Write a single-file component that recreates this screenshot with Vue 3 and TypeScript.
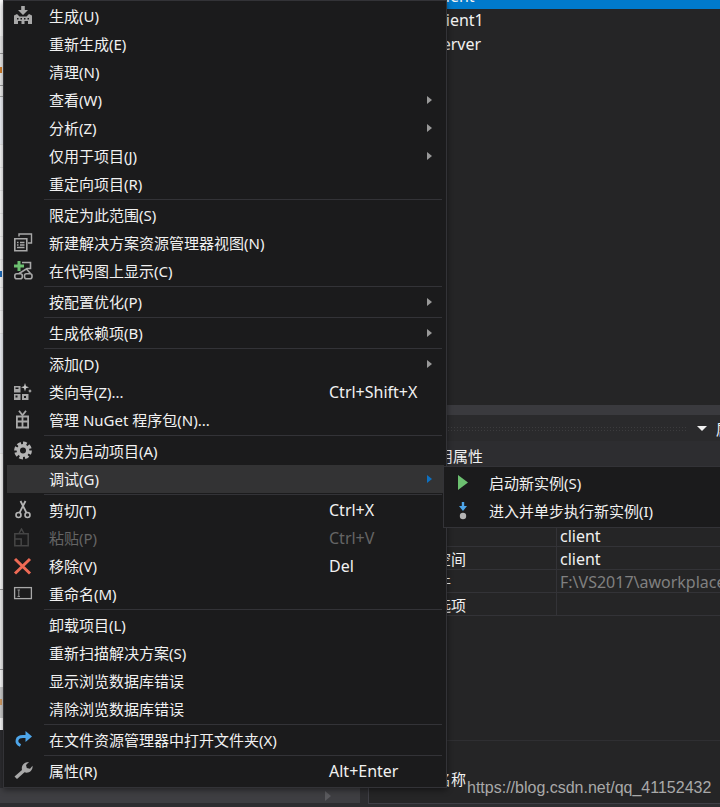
<template>
  <div class="page">
    <div class="left-pane">
      <div class="strip">
        <div
          v-for="(seg, i) in stripSegments"
          :key="i"
          class="strip-seg"
          :style="{ height: seg.h + 'px', background: seg.bg, borderBottomColor: seg.line }"
        >
          <i v-if="seg.mark" class="mark" :style="{ background: seg.mark }"></i>
        </div>
      </div>
      <div class="left-bottom">
        <div class="scrollbar"><span class="scroll-arrow"></span></div>
      </div>
    </div>

    <div class="right-pane">
      <div class="tree">
        <div class="tree-row selected">client</div>
        <div class="tree-row">client1</div>
        <div class="tree-row">server</div>
      </div>
      <div class="band"></div>
      <div class="panel-head">
        <span class="grip"></span>
        <span class="head-caret"></span>
        <span class="head-pin">属</span>
      </div>
      <div class="panel-title">通用属性</div>
      <div class="props">
        <div v-for="(p, i) in props" :key="i" class="prop-row">
          <span class="prop-name">{{ p.name }}</span>
          <span class="prop-value" :class="{ dim: p.dim }">{{ p.value }}</span>
        </div>
      </div>
      <div class="blank"></div>
      <div class="desc">程序集名称</div>
    </div>

    <div class="menu">
      <template v-for="(item, i) in items" :key="i">
        <div v-if="item.sep" class="sep"></div>
        <div v-else class="item" :class="{ hover: item.hover, disabled: item.disabled }">
          <span class="icon-box">
            <svg v-if="item.icon" viewBox="0 0 20 20" width="20" height="20">
              <template v-if="item.icon === 'build'">
                <path fill="#a8a8a8" d="M8.200 0h3.600v4H15l-5 5-5-5h3.200z" />
                <path fill="#a8a8a8" d="M1 18V9.500l3-1.500 2.500 2.500h7L16 8l3 1.500V18z" />
                <path fill="#1b1b1c" d="M4 12h1.500v1.500H4zM7.500 12H9v1.500H7.500zM11 12h1.500v1.500H11zM14.500 12H16v1.500h-1.500zM5 15h3.500v3H5zM11.500 15H15v3h-3.500z" />
              </template>
              <template v-else-if="item.icon === 'view'">
                <path fill="none" stroke="#a8a8a8" stroke-width="1.400" d="M6 3.500V1h12.500v9H15" />
                <path fill="#1b1b1c" stroke="#a8a8a8" stroke-width="1.600" d="M1.800 5.800h12v12h-12z" />
                <path fill="none" stroke="#a8a8a8" stroke-width="1.400" d="M4 9.500h1.500M7 9.500h4.500M4 12h1.500M7 12h4.500M4 14.500h7.500" />
              </template>
              <template v-else-if="item.icon === 'map'">
                <path fill="none" stroke="#a8a8a8" stroke-width="1.600" d="M9 1.500h8.500v6H14L6 12.500M13 7.500l4.500 5" />
                <rect x="1.800" y="12.800" width="7.500" height="5" rx="2" fill="none" stroke="#a8a8a8" stroke-width="1.600" />
                <rect x="11.500" y="12.800" width="7.500" height="5" rx="2" fill="none" stroke="#a8a8a8" stroke-width="1.600" />
                <path fill="#6cc070" d="M4.500 0h3v3.500H11v3H7.500V10h-3V6.500H1v-3h3.500z" />
              </template>
              <template v-else-if="item.icon === 'wizard'">
                <path fill="#a8a8a8" d="M1 4h6.500v6.500H1zM1 12h6.500v6H1zM9 12h6.500v6H9z" />
                <path fill="#1b1b1c" d="M2.500 5.500h3v1.500h-3zM2.500 13.500h2v2h-2zM11 14h2v2h-2z" />
                <path fill="#c8c8c8" d="M12 1l1 3.200 3 1-3 1-1 3.300-1-3.300-3-1 3-1zM17 7l.6 1.600 1.400.4-1.400.5L17 11l-.6-1.500L15 9l1.400-.4z" />
              </template>
              <template v-else-if="item.icon === 'gift'">
                <path fill="none" stroke="#a8a8a8" stroke-width="1.800" d="M6 .8l3.500 4.500L13 .8" />
                <path fill="none" stroke="#a8a8a8" stroke-width="1.800" d="M3.900 6.500h11.200v11H3.900zM9.500 6v12M3.500 11.500h12" />
              </template>
              <template v-else-if="item.icon === 'gear'">
                <circle cx="10" cy="9.500" r="7.300" fill="none" stroke="#b4b4b4" stroke-width="3.200" stroke-dasharray="3.700 2" />
                <circle cx="10" cy="9.500" r="4.700" fill="none" stroke="#b4b4b4" stroke-width="3.400" />
              </template>
              <template v-else-if="item.icon === 'cut'">
                <circle cx="5.500" cy="15" r="2.500" fill="none" stroke="#b4b4b4" stroke-width="1.600" />
                <circle cx="14.500" cy="15" r="2.500" fill="none" stroke="#b4b4b4" stroke-width="1.600" />
                <path fill="none" stroke="#b4b4b4" stroke-width="1.800" d="M6.500 12.800L12.500 1M13.500 12.800L7.500 1" />
              </template>
              <template v-else-if="item.icon === 'paste'">
                <path fill="none" stroke="#454545" stroke-width="1.500" d="M1.800 5.800h13.400v11.900H1.800zM6 5.500L8.500 1l2.500 4.500M1.800 11h6.400v6.700" />
              </template>
              <template v-else-if="item.icon === 'remove'">
                <path fill="none" stroke="#ee6a55" stroke-width="3" d="M2 3l15 14.500M17 3L2 17.500" />
              </template>
              <template v-else-if="item.icon === 'rename'">
                <rect x="1.600" y="3.600" width="16.800" height="11" fill="#1b1b1c" stroke="#a8a8a8" stroke-width="1.300" />
                <path fill="none" stroke="#909090" d="M4.500 6h2.500M5.800 6v6.500M4.500 12.500h2.500" />
              </template>
              <template v-else-if="item.icon === 'open'">
                <path fill="none" stroke="#4ea6ea" stroke-width="2.800" d="M7.500 15.500C2 13 3 6.500 10 6.500h5" />
                <path fill="#4ea6ea" d="M12.500 1l6.500 5.500-6.500 5.500z" />
              </template>
              <template v-else-if="item.icon === 'wrench'">
                <path fill="#a8a8a8" d="M1.500 15.500L9 9C8 5 11 .8 16 1l-3 3 .8 3 3.200.8 2.500-3c.6 4.500-3.500 8-8 6.500L4 18z" />
              </template>
            </svg>
          </span>
          <span class="label">{{ item.label }}</span>
          <span v-if="item.shortcut" class="shortcut">{{ item.shortcut }}</span>
          <span v-if="item.arrow" class="arrow"></span>
        </div>
      </template>
    </div>

    <div class="submenu">
      <div class="item">
        <span class="icon-box">
          <svg viewBox="0 0 20 20" width="20" height="20"><path fill="#6cc070" d="M5 2l10 7.500L5 17z" /></svg>
        </span>
        <span class="label">启动新实例(S)</span>
      </div>
      <div class="item">
        <span class="icon-box">
          <svg viewBox="0 0 20 20" width="20" height="20">
            <path fill="#4ea6ea" d="M8.800 1h2.400v4H14l-4 5-4-5h2.800z" />
            <circle cx="10" cy="15" r="3.200" fill="#b4b4b4" />
          </svg>
        </span>
        <span class="label">进入并单步执行新实例(I)</span>
      </div>
    </div>

    <div class="watermark">https://blog.csdn.net/qq_41152432</div>
  </div>
</template>

<script setup lang="ts">
interface MenuItem {
  label?: string
  icon?: string
  shortcut?: string
  arrow?: boolean
  hover?: boolean
  disabled?: boolean
  sep?: boolean
}

const items: MenuItem[] = [
  { label: '生成(U)', icon: 'build' },
  { label: '重新生成(E)' },
  { label: '清理(N)' },
  { label: '查看(W)', arrow: true },
  { label: '分析(Z)', arrow: true },
  { label: '仅用于项目(J)', arrow: true },
  { label: '重定向项目(R)' },
  { sep: true },
  { label: '限定为此范围(S)' },
  { label: '新建解决方案资源管理器视图(N)', icon: 'view' },
  { label: '在代码图上显示(C)', icon: 'map' },
  { sep: true },
  { label: '按配置优化(P)', arrow: true },
  { sep: true },
  { label: '生成依赖项(B)', arrow: true },
  { sep: true },
  { label: '添加(D)', arrow: true },
  { label: '类向导(Z)...', icon: 'wizard', shortcut: 'Ctrl+Shift+X' },
  { label: '管理 NuGet 程序包(N)...', icon: 'gift' },
  { sep: true },
  { label: '设为启动项目(A)', icon: 'gear' },
  { label: '调试(G)', arrow: true, hover: true },
  { sep: true },
  { label: '剪切(T)', icon: 'cut', shortcut: 'Ctrl+X' },
  { label: '粘贴(P)', icon: 'paste', shortcut: 'Ctrl+V', disabled: true },
  { label: '移除(V)', icon: 'remove', shortcut: 'Del' },
  { label: '重命名(M)', icon: 'rename' },
  { sep: true },
  { label: '卸载项目(L)' },
  { label: '重新扫描解决方案(S)' },
  { label: '显示浏览数据库错误' },
  { label: '清除浏览数据库错误' },
  { sep: true },
  { label: '在文件资源管理器中打开文件夹(X)', icon: 'open' },
  { sep: true },
  { label: '属性(R)', icon: 'wrench', shortcut: 'Alt+Enter' },
]

const props = [
  { name: '', value: 'client' },
  { name: '根命名空间', value: 'client' },
  { name: '项目文件', value: 'F:\\VS2017\\aworkplace', dim: true },
  { name: '自定义选项', value: '' },
]

// visible sliver of the light window behind the menu
const stripSegments: { h: number; bg: string; line: string; mark?: string }[] = [
  { h: 36, bg: '#ffffff', line: 'transparent' },
  { h: 18, bg: '#f0f0f0', line: '#a0a0a0' },
  { h: 32, bg: '#f0f0f0', line: '#a0a0a0', mark: '#d9822b' },
  { h: 11, bg: '#f5f5f5', line: '#b0b0b0' },
  { h: 48, bg: '#f5f8fd', line: '#eeeeee' },
  { h: 23, bg: '#ffffff', line: '#eeeeee' },
  { h: 23, bg: '#ffffff', line: '#eeeeee' },
  { h: 23, bg: '#ffffff', line: '#eeeeee' },
  { h: 23, bg: '#ffffff', line: '#eeeeee' },
  { h: 23, bg: '#ffffff', line: '#eeeeee' },
  { h: 28, bg: '#ffffff', line: '#eeeeee', mark: '#1f6fc0' },
  { h: 23, bg: '#ffffff', line: '#eeeeee' },
  { h: 23, bg: '#ffffff', line: '#eeeeee' },
  { h: 120, bg: '#f7f9fd', line: '#eeeeee' },
  { h: 136, bg: '#ffffff', line: '#a0a0a0' },
  { h: 80, bg: '#f3f3f3', line: '#a0a0a0' },
  { h: 17, bg: '#ffffff', line: 'transparent' },
  { h: 31, bg: '#d2d2d2', line: 'transparent', mark: '#d9a066' },
  { h: 12, bg: '#ffffff', line: 'transparent' },
]
</script>

<style scoped>
.page {
  position: relative;
  display: flex;
  width: 720px;
  height: 807px;
  overflow: hidden;
  background: #2d2d30;
  font-family: "Noto Sans", "Noto Sans CJK SC", sans-serif;
  font-size: 15px;
  color: #f1f1f1;
}

.left-pane {
  display: flex;
  flex-direction: column;
  width: 368px;
  flex-shrink: 0;
}
.strip {
  display: flex;
  flex-direction: column;
  height: 730px;
  overflow: hidden;
  background: #fff;
}
.strip-seg {
  display: flex;
  align-items: center;
  flex-shrink: 0;
  box-sizing: border-box;
  border-bottom: 1px solid transparent;
}
.mark {
  width: 2px;
  height: 6px;
}
.left-bottom {
  flex: 1;
  padding-top: 58px;
}
.scrollbar {
  display: flex;
  justify-content: flex-end;
  align-items: center;
  box-sizing: border-box;
  width: 360px;
  height: 15px;
  padding-right: 29px;
  background: #3e3e42;
}
.scroll-arrow {
  border-left: 6px solid #5a5a5e;
  border-top: 5px solid transparent;
  border-bottom: 5px solid transparent;
}

.right-pane {
  display: flex;
  flex-direction: column;
  flex: 1;
  box-sizing: border-box;
  height: 804px;
  min-width: 0;
  overflow: hidden;
  background: #252526;
  border-left: 1px solid #3f3f46;
  border-bottom: 1px solid #3f3f46;
}
.tree {
  height: 405px;
  flex-shrink: 0;
  overflow: hidden;
}
.tree-row {
  height: 24px;
  line-height: 22px;
  padding-left: 65px;
  font-size: 16px;
  white-space: nowrap;
}
.tree-row.selected {
  margin-top: -15px;
  background: #007acc;
}
.band {
  height: 10px;
  flex-shrink: 0;
  background: #3a3a3e;
}
.panel-head {
  display: flex;
  align-items: center;
  flex-shrink: 0;
  height: 26px;
  padding-left: 78px;
  overflow: hidden;
  background: #2a2a2c;
}
.grip {
  width: 240px;
  height: 5px;
  flex-shrink: 0;
  background-image: radial-gradient(#3c3c3e 1px, transparent 1px);
  background-size: 3px 3px;
}
.head-caret {
  flex-shrink: 0;
  margin-left: 10px;
  border-top: 5px solid #f1f1f1;
  border-left: 5px solid transparent;
  border-right: 5px solid transparent;
}
.head-pin {
  flex-shrink: 0;
  margin-left: 9px;
}
.panel-title {
  flex-shrink: 0;
  height: 25px;
  line-height: 30px;
  padding-left: 54px;
  background: #2d2d30;
  white-space: nowrap;
}
.props {
  flex-shrink: 0;
  padding-top: 58px;
}
.prop-row {
  display: flex;
  box-sizing: border-box;
  height: 23px;
  line-height: 24px;
  border-bottom: 1px solid #333337;
  white-space: nowrap;
}
.prop-name {
  box-sizing: border-box;
  width: 188px;
  flex-shrink: 0;
  padding-left: 22px;
  border-right: 1px solid #333337;
}
.prop-value {
  padding-left: 3px;
  font-size: 16px;
}
.prop-value.dim {
  color: #808080;
}
.blank {
  height: 124px;
  flex-shrink: 0;
  border-bottom: 1px solid #2f2f32;
}
.desc {
  padding: 27px 0 0 22px;
  line-height: 22px;
}

.menu {
  position: absolute;
  left: 3px;
  top: 0;
  box-sizing: border-box;
  width: 444px;
  height: 788px;
  padding: 1px 2px 2px 3px;
  background: #1b1b1c;
  border: 1px solid #333337;
  box-shadow: 0 2px 6px rgba(0, 0, 0, 0.45);
}
.item {
  display: flex;
  align-items: center;
  height: 28px;
  white-space: nowrap;
}
.item.hover {
  background: #333334;
}
.item.disabled {
  color: #656565;
}
.icon-box {
  display: flex;
  align-items: center;
  justify-content: center;
  width: 32px;
  height: 28px;
  flex-shrink: 0;
}
.label {
  width: 280px;
  flex-shrink: 0;
  margin-left: 10px;
  padding-bottom: 2px;
}
.shortcut {
  font-size: 16px;
}
.arrow {
  margin-left: auto;
  margin-right: 12px;
  border-left: 5px solid #999999;
  border-top: 4.5px solid transparent;
  border-bottom: 4.5px solid transparent;
}
.item.hover .arrow {
  border-left-color: #0e70c0;
}
.sep {
  height: 1px;
  margin: 1px 2px 1px 37px;
  background: #333337;
}

.submenu {
  position: absolute;
  left: 443px;
  top: 466px;
  box-sizing: border-box;
  width: 300px;
  height: 62px;
  padding: 2px 3px;
  background: #1b1b1c;
  border: 1px solid #333337;
}

.watermark {
  position: absolute;
  left: 467px;
  top: 778px;
  font-family: "Liberation Sans", sans-serif;
  font-size: 16px;
  line-height: 20px;
  color: #a9a9a9;
  white-space: nowrap;
}
</style>

<style>
html, body {
  margin: 0;
  background: #2d2d30;
}
</style>
